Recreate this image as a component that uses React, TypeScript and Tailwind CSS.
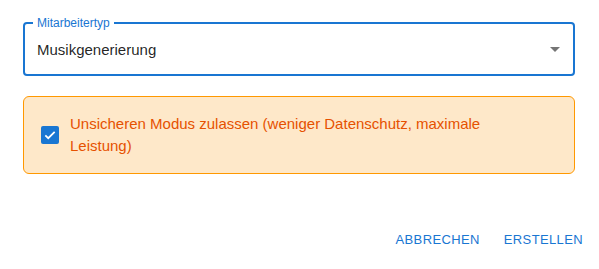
import * as React from 'react';

const font = { fontFamily: '"Liberation Sans", Arial, sans-serif' };

const SelectField: React.FC<{ label: string; value: string }> = ({ label, value }) => (
  <div className="relative mt-[22px] h-[54px] rounded border-2 border-[#1976d2] flex items-center pl-[12px] pr-[6px]">
    <span className="absolute left-[8px] -top-[9px] bg-white px-[4px] text-[12px] leading-[16px] text-[#1976d2]">
      {label}
    </span>
    <span className="flex-1 text-[15px] leading-[23px] text-black/[0.87]">{value}</span>
    <svg viewBox="0 0 24 24" className="w-6 h-6 fill-black/[0.54]">
      <path d="M7 10l5 5 5-5z" />
    </svg>
  </div>
);

export default function App() {
  return (
    <div className="w-[599px] h-[269px] bg-white flex flex-col" style={font}>
      <div className="px-[23px] pr-[24px]">
        <SelectField label="Mitarbeitertyp" value="Musikgenerierung" />

        <div className="mt-[20px] h-[78px] rounded-[6px] border border-[#ff9800] bg-[#fee8c9] flex items-center pl-[17px]">
          <span className="w-[18px] h-[18px] rounded-[2px] bg-[#1976d2] flex items-center justify-center">
            <svg viewBox="0 0 24 24" className="w-[14px] h-[14px]" fill="none" stroke="white" strokeWidth="3">
              <path d="M4 12.5l5 5L20 6.5" />
            </svg>
          </span>
          <p className="ml-[11px] w-[440px] text-[15px] leading-[22px] text-[#e65100]">
            Unsicheren Modus zulassen (weniger Datenschutz, maximale Leistung)
          </p>
        </div>
      </div>

      <div className="mt-auto mb-[11px] flex justify-end gap-[8px] pr-[8px]">
        <button className="px-[8px] py-[6px] text-[13px] leading-[24px] uppercase tracking-[0.02857em] text-[#1976d2]">
          Abbrechen
        </button>
        <button className="px-[8px] py-[6px] text-[13px] leading-[24px] uppercase tracking-[0.02857em] text-[#1976d2]">
          Erstellen
        </button>
      </div>
    </div>
  );
}
